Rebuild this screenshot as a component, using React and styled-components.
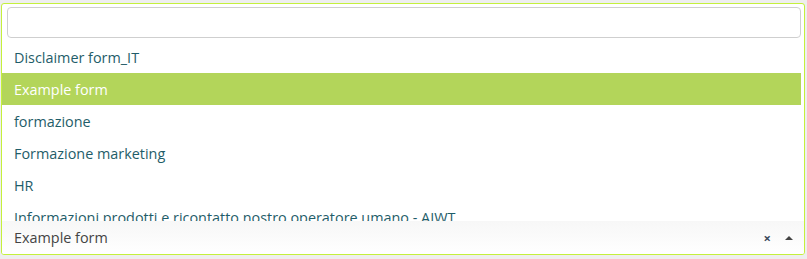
import React from "react";
import styled, { createGlobalStyle } from "styled-components";

const GlobalStyle = createGlobalStyle`
  html, body {
    margin: 0;
    padding: 0;
    background: #eeeeee;
  }
  body {
    font-family: "Open Sans", "Liberation Sans", sans-serif;
  }
`;

const Page = styled.div`
  padding: 3px 2px 4px 1px;
`;

const Panel = styled.div`
  width: 804px;
  height: 252px;
  box-sizing: border-box;
  border: 1px solid #c4f03c;
  border-radius: 3px;
  background: #ffffff;
  display: flex;
  flex-direction: column;
  overflow: hidden;
`;

const SearchWrap = styled.div`
  padding: 3px 3px 0 5px;
`;

const SearchInput = styled.input`
  display: block;
  width: 100%;
  height: 31px;
  box-sizing: border-box;
  border: 1px solid #cfcfcf;
  border-radius: 4px;
  outline: none;
  font: inherit;
  padding: 0 6px;
`;

const List = styled.ul`
  list-style: none;
  margin: 3px 3px 0 0;
  padding: 0;
  height: 180px;
  overflow: hidden;
`;

const Item = styled.li`
  height: 32px;
  line-height: 33px;
  padding-left: 12px;
  font-size: 14.4px;
  white-space: nowrap;
  color: ${(p) => (p.$active ? "#ffffff" : "#1f5d69")};
  background: ${(p) => (p.$active ? "#b3d55a" : "transparent")};
`;

const Bar = styled.div`
  height: 33px;
  display: flex;
  align-items: center;
  padding: 0 11px 0 12px;
  background: linear-gradient(#f7f7f7, #ffffff);
  color: #444444;
  font-size: 14.4px;
`;

const Value = styled.span`
  flex: 1;
`;

const Clear = styled.span`
  font-size: 13px;
  font-weight: bold;
  color: #3a4a5c;
  margin-right: 14px;
`;

const Arrow = styled.span`
  width: 0;
  height: 0;
  border-left: 4px solid transparent;
  border-right: 4px solid transparent;
  border-bottom: 4px solid #444;
`;

const options = [
  "Disclaimer form_IT",
  "Example form",
  "formazione",
  "Formazione marketing",
  "HR",
  "Informazioni prodotti e ricontatto nostro operatore umano - AIWT",
];

export default function App() {
  return (
    <Page>
      <GlobalStyle />
      <Panel>
        <SearchWrap>
          <SearchInput type="text" />
        </SearchWrap>
        <List>
          {options.map((o) => (
            <Item key={o} $active={o === "Example form"}>
              {o}
            </Item>
          ))}
        </List>
        <Bar>
          <Value>Example form</Value>
          <Clear>×</Clear>
          <Arrow />
        </Bar>
      </Panel>
    </Page>
  );
}
